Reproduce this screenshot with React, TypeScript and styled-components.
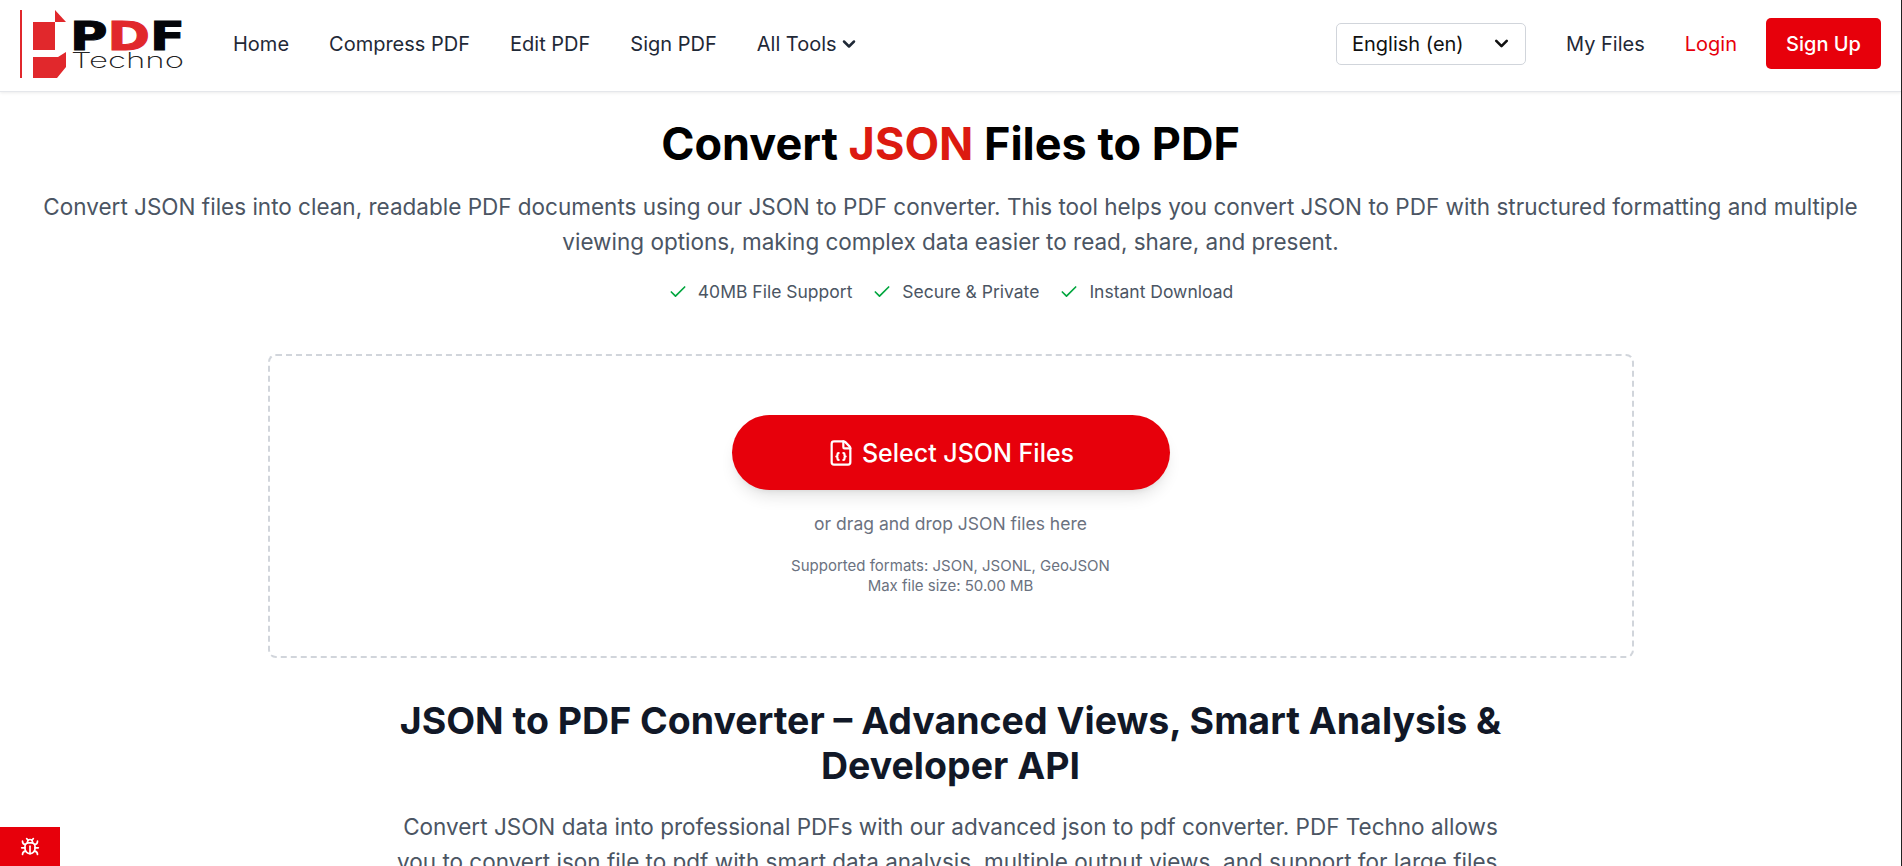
import React from "react";
import styled, { createGlobalStyle } from "styled-components";
import { Check, ChevronDown, Bug, FileJson } from "lucide-react";

const Global = createGlobalStyle`
  html, body { margin: 0; padding: 0; height: 866px; overflow: hidden; background: #fff; }
  body { font-family: Inter, "Liberation Sans", sans-serif; color: #111827; }
  * { box-sizing: border-box; }
`;

const Page = styled.div`
  width: 1902px;
  height: 866px;
  overflow: hidden;
  position: relative;
  border-right: 1px solid #222;
`;
const Header = styled.header`
  height: 92px;
  border-bottom: 1px solid #e5e7eb;
  box-shadow: 0 1px 3px rgba(0, 0, 0, 0.08);
  display: flex;
  align-items: center;
  padding: 0 20px 4px 20px;
`;
const LogoBox = styled.svg`
  width: 166px;
  height: 70px;
  flex: none;
`;
const Nav = styled.nav`
  display: flex;
  align-items: center;
  gap: 40px;
  margin-left: 47px;
`;
const NavLink = styled.a<{ $red?: boolean }>`
  font-size: 20px;
  line-height: 28px;
  color: ${(p) => (p.$red ? "#e7000b" : "#1f2937")};
  display: inline-flex;
  align-items: center;
  gap: 2px;
`;
const Right = styled.div`
  margin-left: auto;
  display: flex;
  align-items: center;
  gap: 40px;
`;
const Lang = styled.div`
  width: 190px;
  height: 42px;
  border: 1px solid #d1d5db;
  border-radius: 5px;
  display: flex;
  align-items: center;
  justify-content: space-between;
  padding: 0 13px 0 15px;
  font-size: 20px;
  color: #111;
`;
const SignUp = styled.a`
  width: 115px;
  height: 51px;
  margin-left: -11px;
  background: #e7000b;
  color: #fff;
  font-size: 20px;
  font-weight: 500;
  border-radius: 5px;
  display: flex;
  align-items: center;
  justify-content: center;
`;
const Main = styled.main`
  display: flex;
  flex-direction: column;
  align-items: center;
`;
const Title = styled.h1`
  margin: 27px 0 0;
  font-size: 45px;
  line-height: 50px;
  font-weight: 700;
  color: #000;
  span { color: #dc1a10; }
`;
const Lead = styled.p`
  margin: 20px 0 0;
  width: 1862px;
  font-size: 22.5px;
  line-height: 35px;
  color: #4b5563;
  text-align: center;
`;
const Badges = styled.div`
  margin-top: 20px;
  display: flex;
  gap: 20px;
`;
const Badge = styled.div`
  display: flex;
  align-items: center;
  gap: 10px;
  font-size: 17.5px;
  line-height: 25px;
  color: #4b5563;
  svg { color: #00a63e; }
`;
const Drop = styled.section`
  margin-top: 50px;
  width: 1366px;
  height: 304px;
  border: 2px dashed #d1d5db;
  border-radius: 8px;
  display: flex;
  flex-direction: column;
  align-items: center;
  padding-top: 59px;
`;
const Select = styled.button`
  width: 438px;
  height: 75px;
  flex: none;
  border: 0;
  border-radius: 38px;
  background: #e7000b;
  color: #fff;
  font: 550 25px Inter, sans-serif;
  display: flex;
  align-items: center;
  justify-content: center;
  gap: 7px;
  box-shadow: 0 10px 15px -3px rgba(0, 0, 0, 0.1), 0 4px 6px -4px rgba(0, 0, 0, 0.1);
`;
const Or = styled.p`
  margin: 21px 0 0;
  font-size: 17.5px;
  line-height: 25px;
  color: #6b7280;
`;
const Formats = styled.p`
  margin: 20px 0 0;
  font-size: 15px;
  line-height: 20px;
  color: #6b7280;
  text-align: center;
`;
const H2 = styled.h2`
  margin: 40px 0 0;
  width: 1200px;
  font-size: 37.5px;
  line-height: 45px;
  font-weight: 700;
  color: #111827;
  text-align: center;
`;
const Body = styled.p`
  margin: 21px 0 0;
  width: 1120px;
  font-size: 22.5px;
  line-height: 35px;
  color: #4b5563;
  text-align: center;
`;
const BugBtn = styled.button`
  position: absolute;
  left: 0;
  bottom: 0;
  width: 60px;
  height: 39px;
  border: 0;
  background: #e7000b;
  color: #fff;
  display: flex;
  align-items: center;
  justify-content: center;
`;

const Logo = () => (
  <LogoBox viewBox="0 0 166 70">
    <rect x="0" y="1" width="2" height="68" fill="#e1282c" />
    <path d="M35 1 L46 13 H35 Z" fill="#e1282c" />
    <rect x="13" y="13" width="22" height="28" fill="#e1282c" />
    <path d="M13 48 H38 L46 43 V58 L37 69 H13 Z" fill="#e1282c" />
    <text x="50" y="41" fontFamily="'DejaVu Sans'" fontWeight="700" fontSize="39" textLength="115" lengthAdjust="spacingAndGlyphs" fill="#05060a" stroke="#05060a" strokeWidth="1">P<tspan fill="#e1282c" stroke="#e1282c">D</tspan>F</text>
    <text x="51" y="59" fontFamily="Inter" fontWeight="200" fontSize="22" textLength="113" lengthAdjust="spacingAndGlyphs" fill="#222">Techno</text>
  </LogoBox>
);

export default function App() {
  return (
    <Page>
      <Global />
      <Header>
        <Logo />
        <Nav>
          <NavLink>Home</NavLink>
          <NavLink>Compress PDF</NavLink>
          <NavLink>Edit PDF</NavLink>
          <NavLink>Sign PDF</NavLink>
          <NavLink>All Tools <ChevronDown size={20} strokeWidth={3} /></NavLink>
        </Nav>
        <Right>
          <Lang>English (en)<ChevronDown size={21} strokeWidth={3} /></Lang>
          <NavLink>My Files</NavLink>
          <NavLink $red>Login</NavLink>
          <SignUp>Sign Up</SignUp>
        </Right>
      </Header>
      <Main>
        <Title>Convert <span>JSON</span> Files to PDF</Title>
        <Lead>Convert JSON files into clean, readable PDF documents using our JSON to PDF converter. This tool helps you convert JSON to PDF with structured formatting and multiple viewing options, making complex data easier to read, share, and present.</Lead>
        <Badges>
          <Badge><Check size={20} />40MB File Support</Badge>
          <Badge><Check size={20} />Secure &amp; Private</Badge>
          <Badge><Check size={20} />Instant Download</Badge>
        </Badges>
        <Drop>
          <Select><FileJson size={28} strokeWidth={1.9} />Select JSON Files</Select>
          <Or>or drag and drop JSON files here</Or>
          <Formats>Supported formats: JSON, JSONL, GeoJSON<br />Max file size: 50.00 MB</Formats>
        </Drop>
        <H2>JSON to PDF Converter – Advanced Views, Smart Analysis &amp; Developer API</H2>
        <Body>Convert JSON data into professional PDFs with our advanced json to pdf converter. PDF Techno allows you to convert json file to pdf with smart data analysis, multiple output views, and support for large files.</Body>
      </Main>
      <BugBtn><Bug size={20} /></BugBtn>
    </Page>
  );
}
